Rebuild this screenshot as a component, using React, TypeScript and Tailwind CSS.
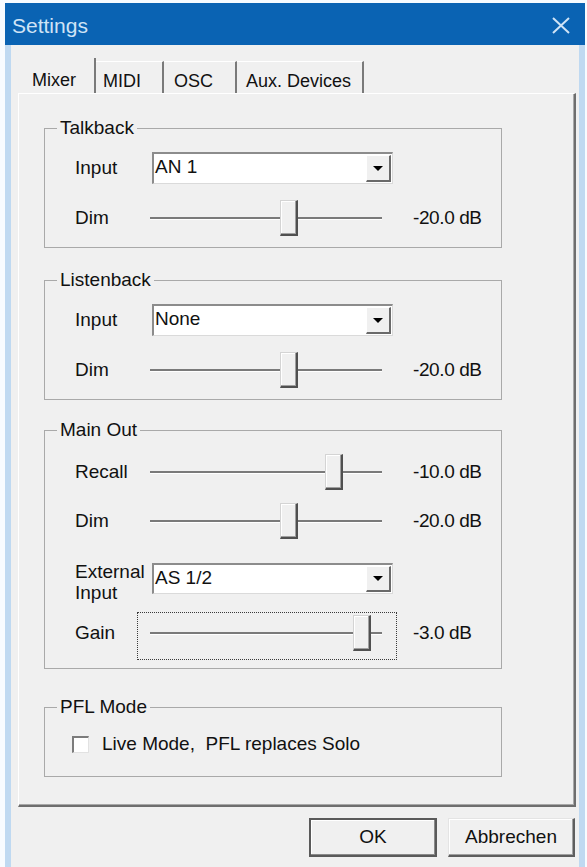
import React from "react";

type SliderRow = { label: string; thumb: number; value: string; focused?: boolean };

function TrackBar({ thumb, focused }: { thumb: number; focused?: boolean }) {
  return (
    <div
      className={`relative h-[48px] w-[260px] border border-dotted ${
        focused ? "border-[#3a3a3a]" : "border-transparent"
      }`}
    >
      {/* channel */}
      <div className="absolute left-[12px] top-[19px] h-[2px] w-[232px] bg-[#7a7a7a]" />
      <div className="absolute left-[12px] top-[21px] h-[1px] w-[232px] bg-white" />
      {/* thumb */}
      <div
        className="absolute top-[2px] h-[36px] w-[18px] bg-[#f0f0f0] border-l border-t border-l-[#d4d4d4] border-t-[#d4d4d4] border-r-2 border-b-2 border-r-[#505050] border-b-[#505050] shadow-[inset_-1px_-1px_0_#a0a0a0,inset_1px_1px_0_#ffffff]"
        style={{ left: thumb }}
      />
    </div>
  );
}

function Combo({ value, h = 32 }: { value: string; h?: number }) {
  return (
    <div
      className="ml-[15px] flex w-[241px] bg-white border-l-2 border-t-2 border-l-[#8c8c8c] border-t-[#8c8c8c] border-r border-b border-r-[#dadada] border-b-[#dadada]"
      style={{ height: h }}
    >
      <span className="flex-1 pl-[1px] text-[19px] leading-[26px] text-[#111]">{value}</span>
      <div className="my-[1px] mr-[1px] flex w-[25px] items-center justify-center bg-[#f0f0f0] border-l border-t border-white border-r-2 border-b-2 border-r-[#6a6a6a] border-b-[#6a6a6a]">
        <svg width="10" height="5" viewBox="0 0 10 5">
          <path d="M0 0h10L5 5z" fill="#000" />
        </svg>
      </div>
    </div>
  );
}

function Slider({ row }: { row: SliderRow }) {
  return (
    <div className="flex items-start">
      <span className="mt-[10px] w-[62px] leading-[22px]">{row.label}</span>
      <TrackBar thumb={row.thumb} focused={row.focused} />
      <span className="ml-[16px] mt-[10px] leading-[22px] tracking-[-0.4px]">{row.value}</span>
    </div>
  );
}

function Group({ title, children, className }: { title: string; children: React.ReactNode; className?: string }) {
  return (
    <fieldset className={`ml-[25px] w-[458px] border border-[#a9a9a9] ${className ?? ""}`}>
      <legend className="ml-[12px] px-[3px] leading-[22px] text-[#111]">{title}</legend>
      <div className="pl-[30px]">{children}</div>
    </fieldset>
  );
}

const tabs = [
  { name: "Mixer", w: 78, pl: 14, active: true },
  { name: "MIDI", w: 68, pl: 7 },
  { name: "OSC", w: 73, pl: 10 },
  { name: "Aux. Devices", w: 127, pl: 9 },
];

export default function App() {
  return (
    <div className="h-[867px] w-[587px] overflow-hidden bg-[#f7fbff] pl-[5px] pt-[3px] font-['Liberation_Sans',Arial,sans-serif] text-[19px] text-[#111]">
      <div className="flex h-[864px] w-[580px] flex-col">
        {/* title bar */}
        <div className="flex h-[42px] shrink-0 items-center justify-between bg-[#0a63b3] pl-[7px] pr-[15px]">
          <span className="pt-[3px] text-[21px] text-[#cfe3f6]">Settings</span>
          <svg width="18" height="17" viewBox="0 0 18 17" className="mt-[2px]">
            <path d="M1 1L17 16M17 1L1 16" stroke="#cfe3f6" strokeWidth="2" />
          </svg>
        </div>

        {/* client area */}
        <div className="flex flex-1 flex-col border-x-[6px] border-[#bfd9f1] bg-[#f0f0f0] pl-[7px] pr-[4px]">
          {/* tabs */}
          <div className="mt-[13px] flex h-[35px] items-end text-[18px]">
            {tabs.map((t) => (
              <div
                key={t.name}
                className={`border-r-2 border-r-[#7a7a7a] ${
                  t.active ? "h-[35px] pt-[9px]" : "h-[32px] pt-[6px] border-t border-t-white"
                }`}
                style={{ width: t.w, paddingLeft: t.pl }}
              >
                {t.name}
              </div>
            ))}
          </div>

          {/* tab page */}
          <div className="h-[714px] w-[558px] border-l border-t border-white border-r-2 border-b-2 border-r-[#6e6e6e] border-b-[#6e6e6e] shadow-[inset_-1px_-1px_0_#a8a8a8]">
            <Group title="Talkback" className="mt-[23px] pb-[2px]">
              <div className="mt-[13px] flex h-[32px] items-center">
                <span className="w-[62px]">Input</span>
                <Combo value="AN 1" />
              </div>
              <div className="mt-[13px]">
                <Slider row={{ label: "Dim", thumb: 142, value: "-20.0 dB" }} />
              </div>
            </Group>

            <Group title="Listenback" className="mt-[21px] pb-[2px]">
              <div className="mt-[13px] flex h-[32px] items-center">
                <span className="w-[62px]">Input</span>
                <Combo value="None" />
              </div>
              <div className="mt-[13px]">
                <Slider row={{ label: "Dim", thumb: 142, value: "-20.0 dB" }} />
              </div>
            </Group>

            <Group title="Main Out" className="mt-[19px] pb-[8px]">
              <div className="mt-[10px]">
                <Slider row={{ label: "Recall", thumb: 187, value: "-10.0 dB" }} />
              </div>
              <div className="mt-[1px]">
                <Slider row={{ label: "Dim", thumb: 142, value: "-20.0 dB" }} />
              </div>
              <div className="mt-[13px] flex items-start">
                <span className="w-[62px] leading-[21px]">
                  External
                  <br />
                  Input
                </span>
                <div className="mt-[2px]">
                  <Combo value="AS 1/2" h={31} />
                </div>
              </div>
              <div className="mt-[9px]">
                <Slider row={{ label: "Gain", thumb: 215, value: "-3.0 dB", focused: true }} />
              </div>
            </Group>

            <Group title="PFL Mode" className="mt-[27px] pb-[21px]">
              <div className="-ml-[3px] mt-[15px] flex h-[22px] items-center">
                <div className="h-[17px] w-[17px] bg-white border-l-2 border-t-2 border-l-[#7c7c7c] border-t-[#7c7c7c] border-r border-b border-r-[#e2e2e2] border-b-[#e2e2e2]" />
                <span className="ml-[13px] leading-[22px]">Live Mode,&nbsp; PFL replaces Solo</span>
              </div>
            </Group>
          </div>

          {/* buttons */}
          <div className="mt-[11px] flex justify-end gap-[11px]">
            <button className="h-[39px] w-[128px] bg-[#f0f0f0] border-2 border-[#5a5a5a] shadow-[inset_-1px_-1px_0_#8a8a8a,inset_1px_1px_0_#ffffff] text-[19px]">
              OK
            </button>
            <button className="h-[39px] w-[127px] bg-[#f0f0f0] border-l border-t border-[#e4e4e4] border-r-2 border-b-2 border-r-[#5e5e5e] border-b-[#5e5e5e] shadow-[inset_-1px_-1px_0_#a0a0a0,inset_1px_1px_0_#ffffff] text-[19px]">
              Abbrechen
            </button>
          </div>
        </div>
      </div>
    </div>
  );
}
